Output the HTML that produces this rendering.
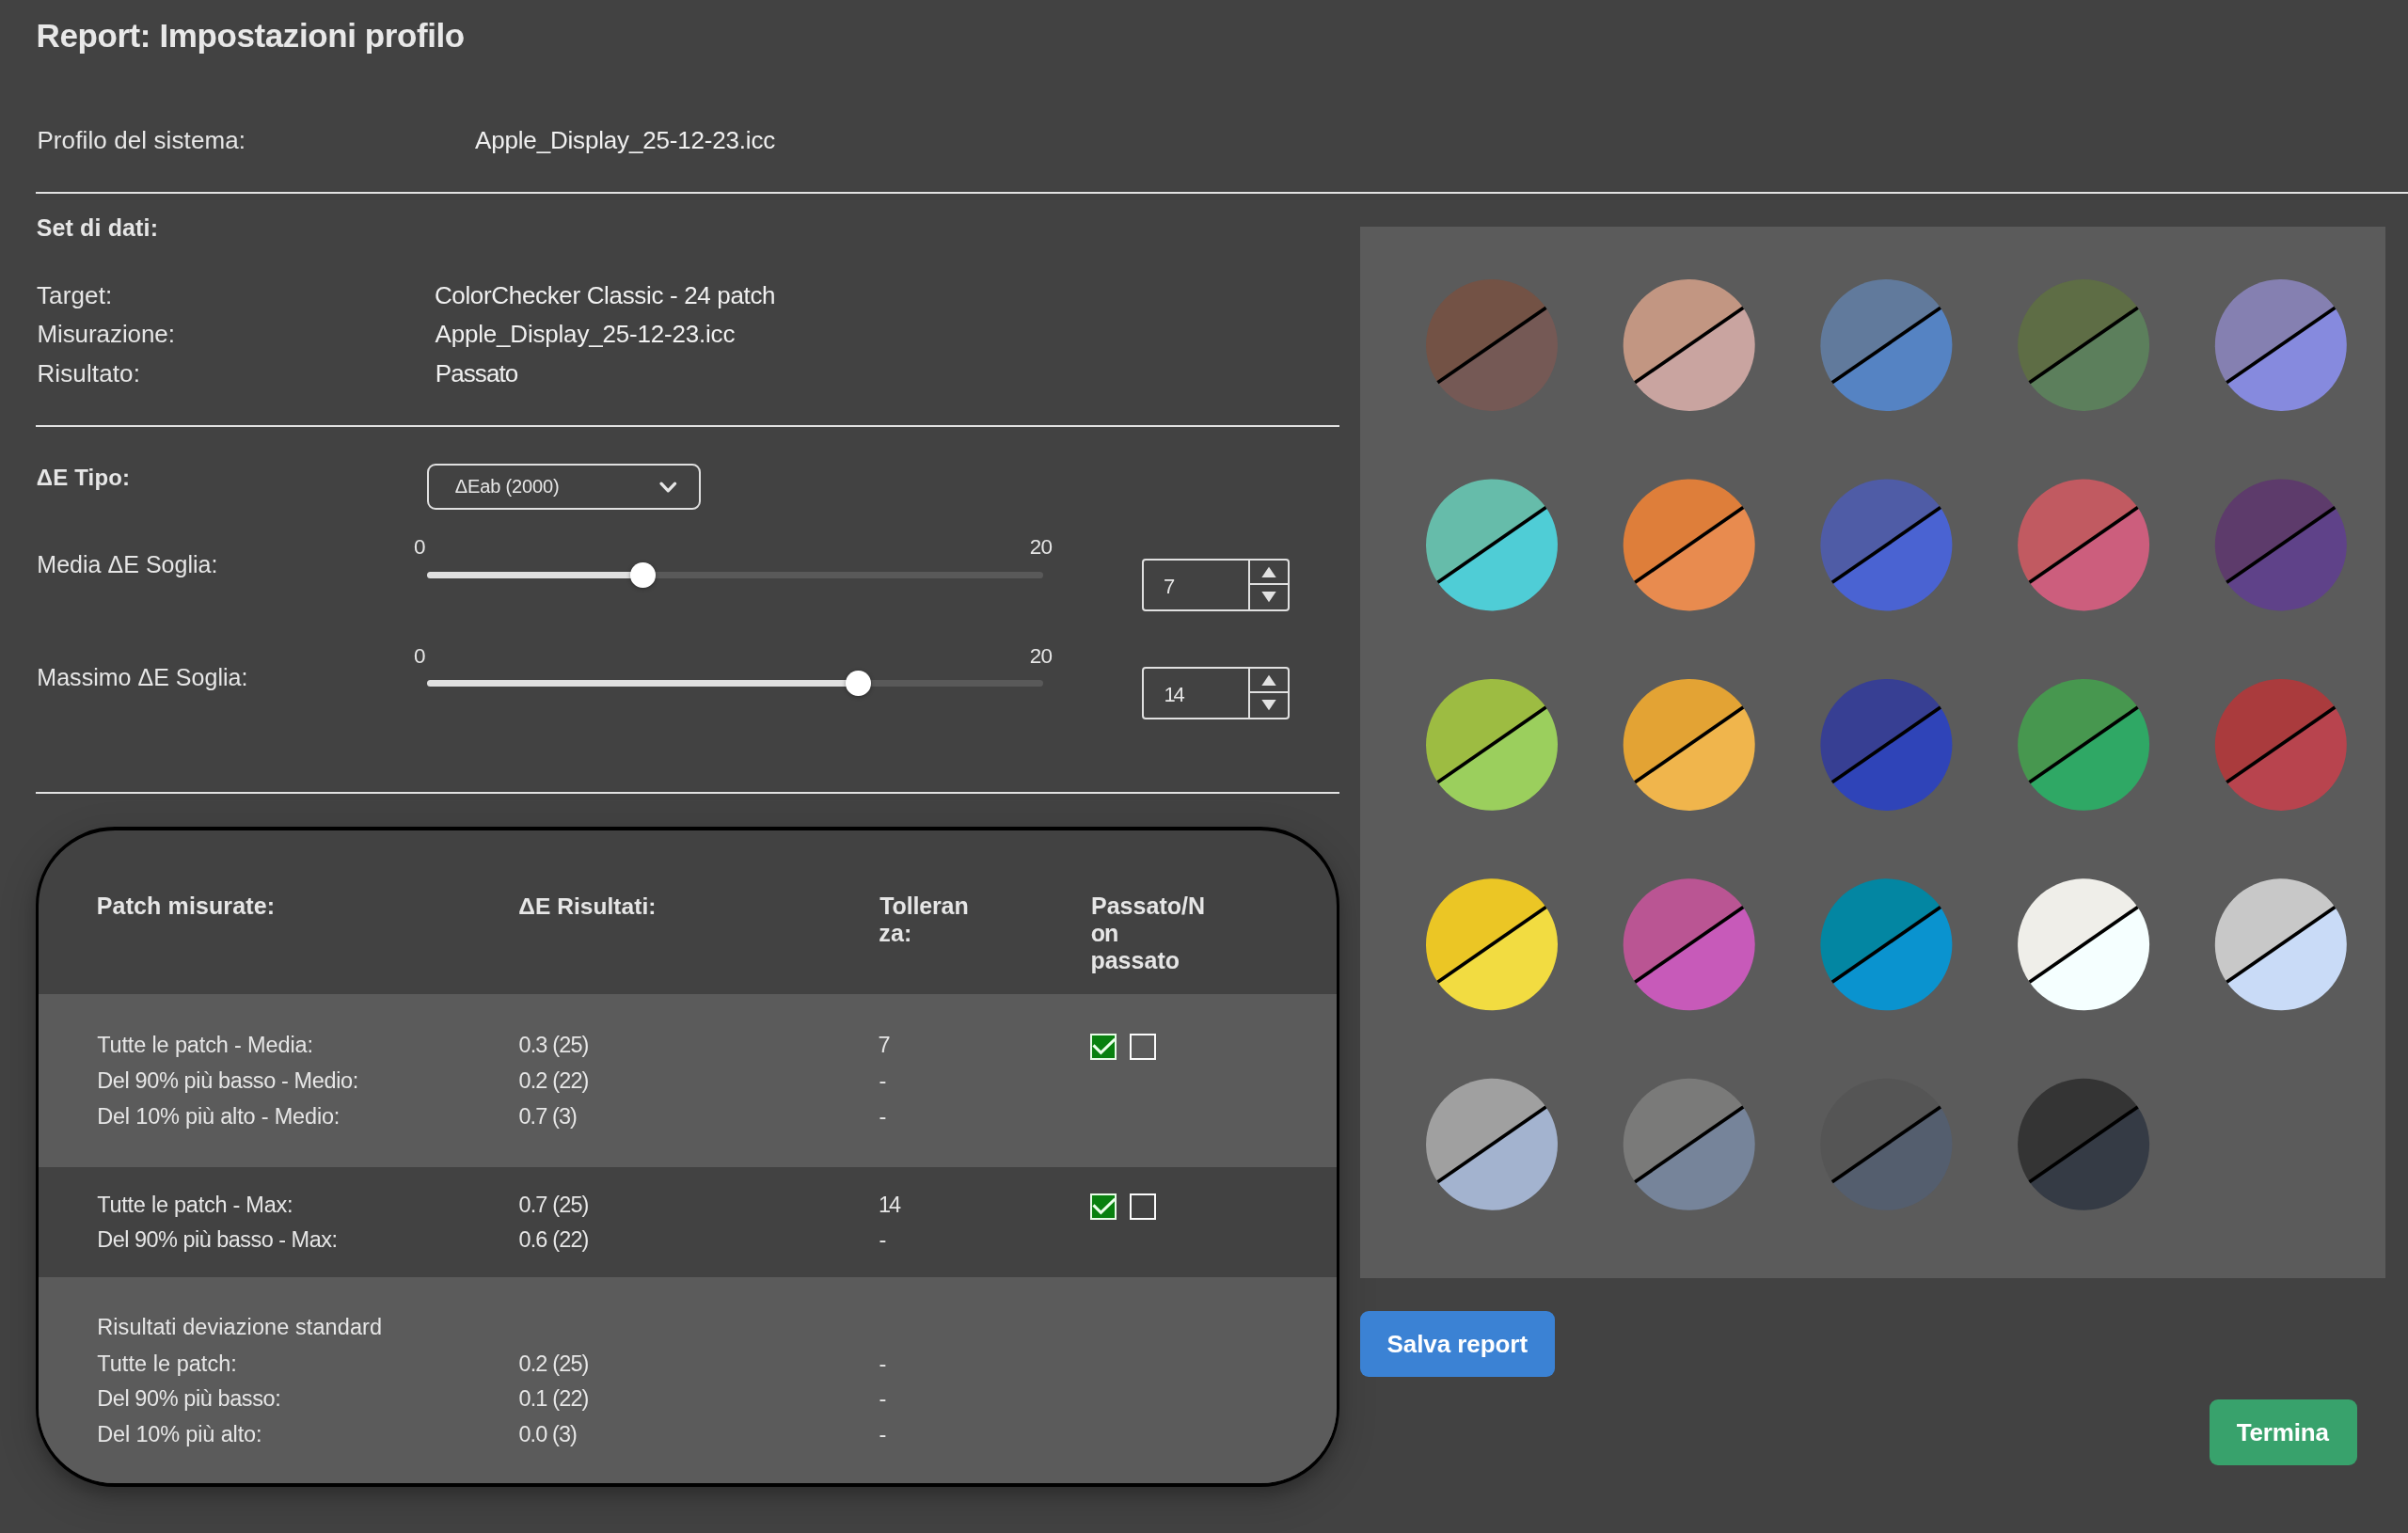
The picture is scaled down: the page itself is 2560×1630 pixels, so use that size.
<!DOCTYPE html>
<html lang="it"><head><meta charset="utf-8"><title>Report: Impostazioni profilo</title>
<style>
html,body{margin:0;padding:0}
body{width:2560px;height:1630px;background:#424242;position:relative;overflow:hidden;
 font-family:"Liberation Sans",sans-serif;color:#e6e6e6}
#app{position:absolute;left:0;top:0;width:2560px;height:1630px;will-change:transform}
.t{position:absolute;white-space:nowrap;display:block;line-height:40px}
.abs{position:absolute;display:block}
.hr{position:absolute;background:#e2e2e2}
.sel{position:absolute;box-sizing:border-box;border:2px solid #e0e0e0;border-radius:9px}
.trk{position:absolute;height:7px;border-radius:4px;background:#595959}
.trk.on{background:#e0e0e0}
.thumb{position:absolute;width:26.6px;height:26.6px;border-radius:50%;background:#fff;box-shadow:0 1px 4px rgba(0,0,0,.35)}
.num{position:absolute;box-sizing:border-box;width:157px;height:55.5px;border:2px solid #e0e0e0;border-radius:4px}
.num .v{position:absolute;left:111.8px;top:0;width:2px;height:100%;background:#e0e0e0}
.num .h{position:absolute;left:111.8px;right:0;top:24px;height:2px;background:#e0e0e0}
.box{position:absolute;box-sizing:border-box;left:38px;top:879px;width:1386px;height:702px;border:solid #000;border-width:4px 3px 4px 3.5px;
 border-radius:84px;background:#424242;overflow:hidden;box-shadow:0 8px 16px rgba(0,0,0,.2),0 12px 40px rgba(0,0,0,.19)}
.band{position:absolute;left:0;right:0;background:#5b5b5b}
.cb{position:absolute;box-sizing:border-box;width:28px;height:28px;border:2px solid #fbfbfb;overflow:hidden}
.cb.ok{background:#08800f;border-color:#e6fbe6}
.cb svg{position:absolute;left:-2px;top:-2px}
.panel{position:absolute;left:1446px;top:241px;width:1090px;height:1117.5px;background:#5b5b5b}
.btn{position:absolute;border-radius:9px}
</style></head>
<body>
<div id="app">
<span class="t" style="left:38.53px;top:18px;font-size:35px;font-weight:bold;letter-spacing:-0.404px;color:#e8e8e8;">Report: Impostazioni profilo</span>
<span class="t" style="left:39.40px;top:129px;font-size:26px;letter-spacing:0.105px;">Profilo del sistema:</span>
<span class="t" style="left:505.06px;top:129px;font-size:26px;letter-spacing:-0.180px;color:#f0f0f0;">Apple_Display_25-12-23.icc</span>
<div class="hr" style="left:38px;top:204.0px;width:2522px;height:2px"></div>
<span class="t" style="left:38.68px;top:222px;font-size:25px;font-weight:bold;letter-spacing:0.137px;">Set di dati:</span>
<span class="t" style="left:38.89px;top:294px;font-size:26px;letter-spacing:0.158px;">Target:</span>
<span class="t" style="left:461.88px;top:294px;font-size:26px;letter-spacing:-0.338px;color:#f0f0f0;">ColorChecker Classic - 24 patch</span>
<span class="t" style="left:39.40px;top:335px;font-size:26px;letter-spacing:-0.073px;">Misurazione:</span>
<span class="t" style="left:462.53px;top:335px;font-size:26px;letter-spacing:-0.195px;color:#f0f0f0;">Apple_Display_25-12-23.icc</span>
<span class="t" style="left:39.40px;top:377px;font-size:26px;letter-spacing:0.124px;">Risultato:</span>
<span class="t" style="left:462.75px;top:377px;font-size:26px;letter-spacing:-0.900px;color:#f0f0f0;">Passato</span>
<div class="hr" style="left:38px;top:452.0px;width:1386px;height:2px"></div>
<span class="t" style="left:38.74px;top:488px;font-size:24px;font-weight:bold;letter-spacing:0.170px;">ΔE Tipo:</span>
<div class="sel" style="left:454px;top:493px;width:291px;height:48.5px"></div>
<span class="t" style="left:483.87px;top:497px;font-size:20px;letter-spacing:-0.152px;">ΔEab (2000)</span>
<svg class="abs" style="left:700px;top:509.7px" width="22" height="16" viewBox="0 0 22 16"><path d="M3 4.2 L10.3 11.8 L17.6 4.2" fill="none" stroke="#e6e6e6" stroke-width="3.3" stroke-linecap="round" stroke-linejoin="round"/></svg>
<span class="t" style="left:39.35px;top:580px;font-size:25px;letter-spacing:0.023px;">Media ΔE Soglia:</span>
<span class="t" style="left:440.11px;top:562px;font-size:22.5px;">0</span>
<span class="t" style="left:1094.73px;top:562px;font-size:22.5px;letter-spacing:-0.850px;">20</span>
<div class="trk" style="left:454px;top:607.9px;width:654.5px"></div>
<div class="trk on" style="left:454px;top:607.9px;width:229.1px"></div>
<div class="thumb" style="left:670.0px;top:598.3px"></div>
<div class="num" style="left:1213.5px;top:594.3px;height:55.5px"><i class="v"></i><i class="h"></i><svg class="abs" style="left:124.2px;top:6px" width="18" height="13" viewBox="0 0 18 13"><path d="M1.3 12 L9 0.8 L16.7 12 Z" fill="#e2e2e2"/></svg><svg class="abs" style="left:124.2px;top:31.6px" width="18" height="13" viewBox="0 0 18 13"><path d="M1.3 1 L9 12.2 L16.7 1 Z" fill="#e2e2e2"/></svg></div>
<span class="t" style="left:1237.05px;top:604px;font-size:22px;">7</span>
<span class="t" style="left:39.35px;top:700px;font-size:25px;letter-spacing:0.021px;">Massimo ΔE Soglia:</span>
<span class="t" style="left:440.11px;top:678px;font-size:22.5px;">0</span>
<span class="t" style="left:1094.73px;top:678px;font-size:22.5px;letter-spacing:-0.850px;">20</span>
<div class="trk" style="left:454px;top:723.0px;width:654.5px"></div>
<div class="trk on" style="left:454px;top:723.0px;width:458.1px"></div>
<div class="thumb" style="left:899.0px;top:713.4px"></div>
<div class="num" style="left:1213.5px;top:709.3px;height:55.8px"><i class="v"></i><i class="h"></i><svg class="abs" style="left:124.2px;top:6px" width="18" height="13" viewBox="0 0 18 13"><path d="M1.3 12 L9 0.8 L16.7 12 Z" fill="#e2e2e2"/></svg><svg class="abs" style="left:124.2px;top:31.6px" width="18" height="13" viewBox="0 0 18 13"><path d="M1.3 1 L9 12.2 L16.7 1 Z" fill="#e2e2e2"/></svg></div>
<span class="t" style="left:1237.39px;top:719px;font-size:22px;letter-spacing:-2.117px;">14</span>
<div class="hr" style="left:38px;top:842.0px;width:1386px;height:2px"></div>
<div class="box"><div class="band" style="top:174px;height:184px"></div><div class="band" style="top:475px;height:224px"></div></div>
<span class="t" style="left:102.84px;top:943px;font-size:25px;font-weight:bold;letter-spacing:0.116px;">Patch misurate:</span>
<span class="t" style="left:551.31px;top:944px;font-size:24.5px;font-weight:bold;letter-spacing:0.045px;">ΔE Risultati:</span>
<span class="t" style="left:935.26px;top:943px;font-size:25px;font-weight:bold;letter-spacing:-0.141px;">Tolleran</span>
<span class="t" style="left:934.23px;top:972px;font-size:25px;font-weight:bold;letter-spacing:0.234px;">za:</span>
<span class="t" style="left:1159.97px;top:943px;font-size:25px;font-weight:bold;letter-spacing:0.034px;">Passato/N</span>
<span class="t" style="left:1159.80px;top:972px;font-size:25px;font-weight:bold;letter-spacing:-1.090px;">on</span>
<span class="t" style="left:1159.39px;top:1001px;font-size:25px;font-weight:bold;letter-spacing:0.023px;">passato</span>
<span class="t" style="left:103.21px;top:1091px;font-size:23.5px;letter-spacing:-0.146px;">Tutte le patch - Media:</span>
<span class="t" style="left:551.46px;top:1091px;font-size:23.5px;letter-spacing:-0.857px;">0.3 (25)</span>
<span class="t" style="left:933.58px;top:1091px;font-size:23.5px;">7</span>
<span class="t" style="left:103.19px;top:1129px;font-size:23.5px;letter-spacing:-0.370px;">Del 90% più basso - Medio:</span>
<span class="t" style="left:551.46px;top:1129px;font-size:23.5px;letter-spacing:-0.857px;">0.2 (22)</span>
<span class="t" style="left:934.39px;top:1129px;font-size:23.5px;">-</span>
<span class="t" style="left:103.19px;top:1167px;font-size:23.5px;letter-spacing:-0.183px;">Del 10% più alto - Medio:</span>
<span class="t" style="left:551.46px;top:1167px;font-size:23.5px;letter-spacing:-0.908px;">0.7 (3)</span>
<span class="t" style="left:934.39px;top:1167px;font-size:23.5px;">-</span>
<span class="t" style="left:103.20px;top:1261px;font-size:23.5px;letter-spacing:-0.248px;">Tutte le patch - Max:</span>
<span class="t" style="left:551.45px;top:1261px;font-size:23.5px;letter-spacing:-0.857px;">0.7 (25)</span>
<span class="t" style="left:933.89px;top:1261px;font-size:23.5px;letter-spacing:-1.935px;">14</span>
<span class="t" style="left:103.19px;top:1298px;font-size:23.5px;letter-spacing:-0.520px;">Del 90% più basso - Max:</span>
<span class="t" style="left:551.45px;top:1298px;font-size:23.5px;letter-spacing:-0.857px;">0.6 (22)</span>
<span class="t" style="left:934.40px;top:1298px;font-size:23.5px;">-</span>
<span class="t" style="left:103.19px;top:1391px;font-size:23.5px;letter-spacing:0.086px;">Risultati deviazione standard</span>
<span class="t" style="left:103.21px;top:1430px;font-size:23.5px;letter-spacing:0.044px;">Tutte le patch:</span>
<span class="t" style="left:551.46px;top:1430px;font-size:23.5px;letter-spacing:-0.857px;">0.2 (25)</span>
<span class="t" style="left:934.39px;top:1430px;font-size:23.5px;">-</span>
<span class="t" style="left:103.19px;top:1467px;font-size:23.5px;letter-spacing:-0.410px;">Del 90% più basso:</span>
<span class="t" style="left:551.46px;top:1467px;font-size:23.5px;letter-spacing:-0.857px;">0.1 (22)</span>
<span class="t" style="left:934.39px;top:1467px;font-size:23.5px;">-</span>
<span class="t" style="left:103.19px;top:1505px;font-size:23.5px;letter-spacing:-0.146px;">Del 10% più alto:</span>
<span class="t" style="left:551.46px;top:1505px;font-size:23.5px;letter-spacing:-0.908px;">0.0 (3)</span>
<span class="t" style="left:934.39px;top:1505px;font-size:23.5px;">-</span>
<div class="cb ok" style="left:1159px;top:1099px"><svg width="28" height="28" viewBox="0 0 28 28"><path d="M3.5 12.4 L11.4 20.3 L26.4 5.8" fill="none" stroke="#eaffea" stroke-width="3.0"/></svg></div>
<div class="cb" style="left:1201px;top:1099px"></div>
<div class="cb ok" style="left:1159px;top:1268.5px"><svg width="28" height="28" viewBox="0 0 28 28"><path d="M3.5 12.4 L11.4 20.3 L26.4 5.8" fill="none" stroke="#eaffea" stroke-width="3.0"/></svg></div>
<div class="cb" style="left:1201px;top:1268.5px"></div>
<div class="panel"></div>
<svg class="abs" style="left:0;top:0" width="2560" height="1630" viewBox="0 0 2560 1630"><path d="M1528.45 406.85 A70 70 0 0 1 1643.55 327.15 Z" fill="#735245"/><path d="M1643.55 327.15 A70 70 0 0 1 1528.45 406.85 Z" fill="#755955"/><line x1="1528.45" y1="406.85" x2="1643.55" y2="327.15" stroke="#000" stroke-width="3.7"/><path d="M1738.15 406.85 A70 70 0 0 1 1853.25 327.15 Z" fill="#c29682"/><path d="M1853.25 327.15 A70 70 0 0 1 1738.15 406.85 Z" fill="#c9a4a0"/><line x1="1738.15" y1="406.85" x2="1853.25" y2="327.15" stroke="#000" stroke-width="3.7"/><path d="M1947.85 406.85 A70 70 0 0 1 2062.95 327.15 Z" fill="#617a9c"/><path d="M2062.95 327.15 A70 70 0 0 1 1947.85 406.85 Z" fill="#5583c3"/><line x1="1947.85" y1="406.85" x2="2062.95" y2="327.15" stroke="#000" stroke-width="3.7"/><path d="M2157.55 406.85 A70 70 0 0 1 2272.65 327.15 Z" fill="#5e6d45"/><path d="M2272.65 327.15 A70 70 0 0 1 2157.55 406.85 Z" fill="#5c7f5c"/><line x1="2157.55" y1="406.85" x2="2272.65" y2="327.15" stroke="#000" stroke-width="3.7"/><path d="M2367.25 406.85 A70 70 0 0 1 2482.35 327.15 Z" fill="#8580b1"/><path d="M2482.35 327.15 A70 70 0 0 1 2367.25 406.85 Z" fill="#868ade"/><line x1="2367.25" y1="406.85" x2="2482.35" y2="327.15" stroke="#000" stroke-width="3.7"/><path d="M1528.45 619.30 A70 70 0 0 1 1643.55 539.60 Z" fill="#66bcaa"/><path d="M1643.55 539.60 A70 70 0 0 1 1528.45 619.30 Z" fill="#4fcdd6"/><line x1="1528.45" y1="619.30" x2="1643.55" y2="539.60" stroke="#000" stroke-width="3.7"/><path d="M1738.15 619.30 A70 70 0 0 1 1853.25 539.60 Z" fill="#de7e3a"/><path d="M1853.25 539.60 A70 70 0 0 1 1738.15 619.30 Z" fill="#e88b4f"/><line x1="1738.15" y1="619.30" x2="1853.25" y2="539.60" stroke="#000" stroke-width="3.7"/><path d="M1947.85 619.30 A70 70 0 0 1 2062.95 539.60 Z" fill="#4f5ca6"/><path d="M2062.95 539.60 A70 70 0 0 1 1947.85 619.30 Z" fill="#4a63d2"/><line x1="1947.85" y1="619.30" x2="2062.95" y2="539.60" stroke="#000" stroke-width="3.7"/><path d="M2157.55 619.30 A70 70 0 0 1 2272.65 539.60 Z" fill="#c15a61"/><path d="M2272.65 539.60 A70 70 0 0 1 2157.55 619.30 Z" fill="#cc5e7d"/><line x1="2157.55" y1="619.30" x2="2272.65" y2="539.60" stroke="#000" stroke-width="3.7"/><path d="M2367.25 619.30 A70 70 0 0 1 2482.35 539.60 Z" fill="#5d3b6b"/><path d="M2482.35 539.60 A70 70 0 0 1 2367.25 619.30 Z" fill="#5f4289"/><line x1="2367.25" y1="619.30" x2="2482.35" y2="539.60" stroke="#000" stroke-width="3.7"/><path d="M1528.45 831.75 A70 70 0 0 1 1643.55 752.05 Z" fill="#9dbc42"/><path d="M1643.55 752.05 A70 70 0 0 1 1528.45 831.75 Z" fill="#9bcf5d"/><line x1="1528.45" y1="831.75" x2="1643.55" y2="752.05" stroke="#000" stroke-width="3.7"/><path d="M1738.15 831.75 A70 70 0 0 1 1853.25 752.05 Z" fill="#e3a334"/><path d="M1853.25 752.05 A70 70 0 0 1 1738.15 831.75 Z" fill="#f0b54c"/><line x1="1738.15" y1="831.75" x2="1853.25" y2="752.05" stroke="#000" stroke-width="3.7"/><path d="M1947.85 831.75 A70 70 0 0 1 2062.95 752.05 Z" fill="#373f93"/><path d="M2062.95 752.05 A70 70 0 0 1 1947.85 831.75 Z" fill="#2f44b8"/><line x1="1947.85" y1="831.75" x2="2062.95" y2="752.05" stroke="#000" stroke-width="3.7"/><path d="M2157.55 831.75 A70 70 0 0 1 2272.65 752.05 Z" fill="#47974f"/><path d="M2272.65 752.05 A70 70 0 0 1 2157.55 831.75 Z" fill="#2fa865"/><line x1="2157.55" y1="831.75" x2="2272.65" y2="752.05" stroke="#000" stroke-width="3.7"/><path d="M2367.25 831.75 A70 70 0 0 1 2482.35 752.05 Z" fill="#aa3b3d"/><path d="M2482.35 752.05 A70 70 0 0 1 2367.25 831.75 Z" fill="#b8444e"/><line x1="2367.25" y1="831.75" x2="2482.35" y2="752.05" stroke="#000" stroke-width="3.7"/><path d="M1528.45 1044.20 A70 70 0 0 1 1643.55 964.50 Z" fill="#ebc625"/><path d="M1643.55 964.50 A70 70 0 0 1 1528.45 1044.20 Z" fill="#f2dc41"/><line x1="1528.45" y1="1044.20" x2="1643.55" y2="964.50" stroke="#000" stroke-width="3.7"/><path d="M1738.15 1044.20 A70 70 0 0 1 1853.25 964.50 Z" fill="#ba5593"/><path d="M1853.25 964.50 A70 70 0 0 1 1738.15 1044.20 Z" fill="#c75ab9"/><line x1="1738.15" y1="1044.20" x2="1853.25" y2="964.50" stroke="#000" stroke-width="3.7"/><path d="M1947.85 1044.20 A70 70 0 0 1 2062.95 964.50 Z" fill="#0386a2"/><path d="M2062.95 964.50 A70 70 0 0 1 1947.85 1044.20 Z" fill="#0a93cf"/><line x1="1947.85" y1="1044.20" x2="2062.95" y2="964.50" stroke="#000" stroke-width="3.7"/><path d="M2157.55 1044.20 A70 70 0 0 1 2272.65 964.50 Z" fill="#efeee9"/><path d="M2272.65 964.50 A70 70 0 0 1 2157.55 1044.20 Z" fill="#f5ffff"/><line x1="2157.55" y1="1044.20" x2="2272.65" y2="964.50" stroke="#000" stroke-width="3.7"/><path d="M2367.25 1044.20 A70 70 0 0 1 2482.35 964.50 Z" fill="#c8c8c8"/><path d="M2482.35 964.50 A70 70 0 0 1 2367.25 1044.20 Z" fill="#c9dbf7"/><line x1="2367.25" y1="1044.20" x2="2482.35" y2="964.50" stroke="#000" stroke-width="3.7"/><path d="M1528.45 1256.65 A70 70 0 0 1 1643.55 1176.95 Z" fill="#a0a0a0"/><path d="M1643.55 1176.95 A70 70 0 0 1 1528.45 1256.65 Z" fill="#a3b3cf"/><line x1="1528.45" y1="1256.65" x2="1643.55" y2="1176.95" stroke="#000" stroke-width="3.7"/><path d="M1738.15 1256.65 A70 70 0 0 1 1853.25 1176.95 Z" fill="#7a7a79"/><path d="M1853.25 1176.95 A70 70 0 0 1 1738.15 1256.65 Z" fill="#76849a"/><line x1="1738.15" y1="1256.65" x2="1853.25" y2="1176.95" stroke="#000" stroke-width="3.7"/><path d="M1947.85 1256.65 A70 70 0 0 1 2062.95 1176.95 Z" fill="#555555"/><path d="M2062.95 1176.95 A70 70 0 0 1 1947.85 1256.65 Z" fill="#545e6e"/><line x1="1947.85" y1="1256.65" x2="2062.95" y2="1176.95" stroke="#000" stroke-width="3.7"/><path d="M2157.55 1256.65 A70 70 0 0 1 2272.65 1176.95 Z" fill="#343434"/><path d="M2272.65 1176.95 A70 70 0 0 1 2157.55 1256.65 Z" fill="#353b45"/><line x1="2157.55" y1="1256.65" x2="2272.65" y2="1176.95" stroke="#000" stroke-width="3.7"/></svg>
<div class="btn" style="left:1446px;top:1394px;width:207px;height:70px;background:#3b82d4"></div>
<span class="t" style="left:1474.52px;top:1409px;font-size:26px;font-weight:bold;letter-spacing:-0.066px;color:#fff;">Salva report</span>
<div class="btn" style="left:2348.5px;top:1488px;width:157px;height:70px;background:#38a26c"></div>
<span class="t" style="left:2377.84px;top:1503px;font-size:26px;font-weight:bold;letter-spacing:-0.190px;color:#fff;">Termina</span>
</div>
</body></html>
